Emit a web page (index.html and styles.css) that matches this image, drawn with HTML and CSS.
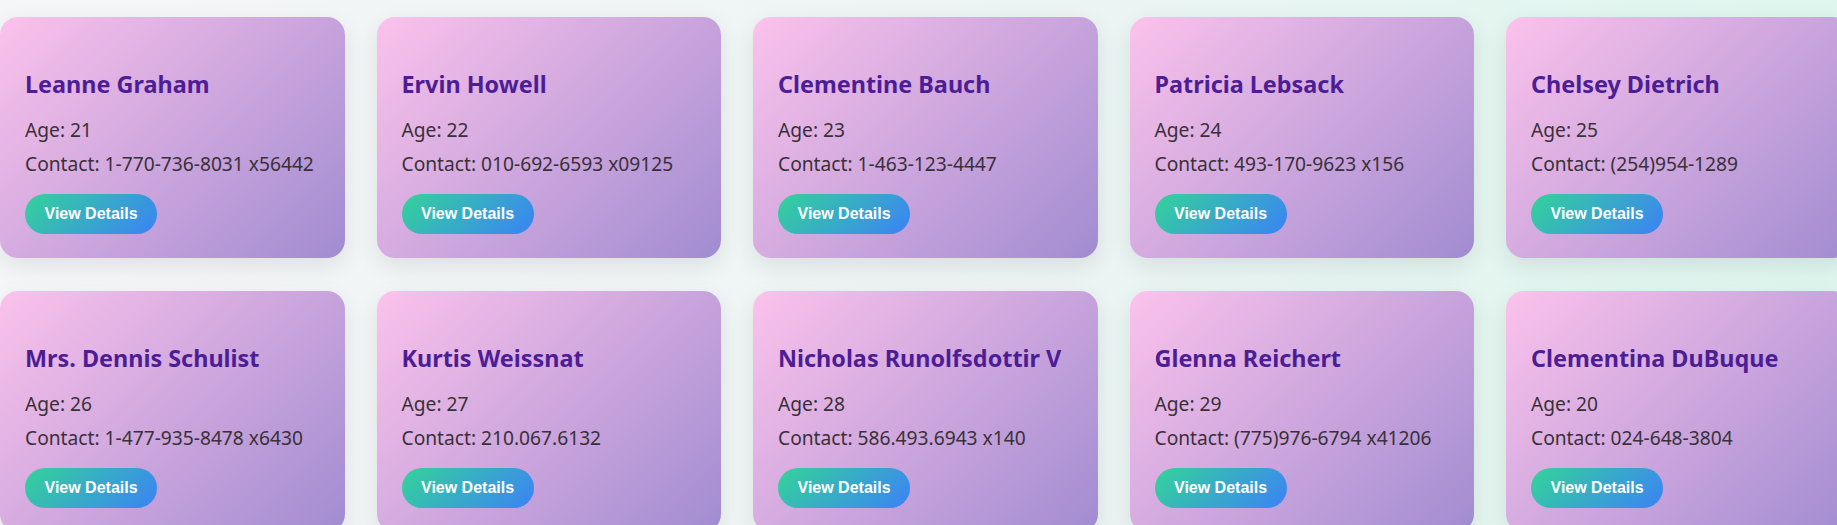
FILE: index.html
```html
<!DOCTYPE html>
<html lang="en">
<head>
<meta charset="utf-8">
<title>Users</title>
<link rel="stylesheet" href="styles.css">
</head>
<body>
<main class="grid">
  <div class="card"><h2 class="name">Leanne Graham</h2><p class="info">Age: 21</p><p class="info contact">Contact: 1-770-736-8031 x56442</p><button class="btn">View Details</button></div>
  <div class="card"><h2 class="name">Ervin Howell</h2><p class="info">Age: 22</p><p class="info contact">Contact: 010-692-6593 x09125</p><button class="btn">View Details</button></div>
  <div class="card"><h2 class="name">Clementine Bauch</h2><p class="info">Age: 23</p><p class="info contact">Contact: 1-463-123-4447</p><button class="btn">View Details</button></div>
  <div class="card"><h2 class="name">Patricia Lebsack</h2><p class="info">Age: 24</p><p class="info contact">Contact: 493-170-9623 x156</p><button class="btn">View Details</button></div>
  <div class="card"><h2 class="name">Chelsey Dietrich</h2><p class="info">Age: 25</p><p class="info contact">Contact: (254)954-1289</p><button class="btn">View Details</button></div>
  <div class="card"><h2 class="name">Mrs. Dennis Schulist</h2><p class="info">Age: 26</p><p class="info contact">Contact: 1-477-935-8478 x6430</p><button class="btn">View Details</button></div>
  <div class="card"><h2 class="name">Kurtis Weissnat</h2><p class="info">Age: 27</p><p class="info contact">Contact: 210.067.6132</p><button class="btn">View Details</button></div>
  <div class="card"><h2 class="name">Nicholas Runolfsdottir V</h2><p class="info">Age: 28</p><p class="info contact">Contact: 586.493.6943 x140</p><button class="btn">View Details</button></div>
  <div class="card"><h2 class="name">Glenna Reichert</h2><p class="info">Age: 29</p><p class="info contact">Contact: (775)976-6794 x41206</p><button class="btn">View Details</button></div>
  <div class="card"><h2 class="name">Clementina DuBuque</h2><p class="info">Age: 20</p><p class="info contact">Contact: 024-648-3804</p><button class="btn">View Details</button></div>
</main>
</body>
</html>
```

FILE: styles.css
```css
html, body {
  margin: 0;
  padding: 0;
  height: 100%;
}
body {
  background: linear-gradient(90deg, #f5f6f8 0%, #eef4f4 50%, #def6ee 100%);
  font-family: "Noto Sans", "Open Sans", sans-serif;
  overflow: hidden;
}
.grid {
  display: grid;
  grid-template-columns: repeat(5, 344.5px);
  column-gap: 32px;
  row-gap: 33px;
  padding-top: 17px;
}
.card {
  box-sizing: border-box;
  height: 241px;
  padding: 25px 25px 24px;
  border-radius: 18px;
  background: linear-gradient(135deg, #fbc2eb 0%, #a18cd1 100%);
  box-shadow: 0 8px 24px rgba(0, 0, 0, 0.09);
  display: flex;
  flex-direction: column;
  align-items: flex-start;
}
.name {
  margin: 28.4px 0 0;
  font-size: 23.4px;
  line-height: 29px;
  font-weight: 700;
  color: #4c1d95;
  white-space: nowrap;
}
.info {
  margin: 17px 0 0;
  font-size: 19.2px;
  line-height: 27px;
  color: #3a3038;
  white-space: nowrap;
}
.info.contact {
  margin-top: 6.5px;
}
.btn {
  margin-top: 17px;
  height: 40px;
  padding: 0 19.5px;
  border: none;
  border-radius: 20px;
  background: linear-gradient(135deg, #34d399 0%, #3b82f6 100%);
  color: #ffffff;
  font-family: "Liberation Sans", Arial, sans-serif;
  font-weight: 700;
  font-size: 16px;
  cursor: pointer;
}
```
